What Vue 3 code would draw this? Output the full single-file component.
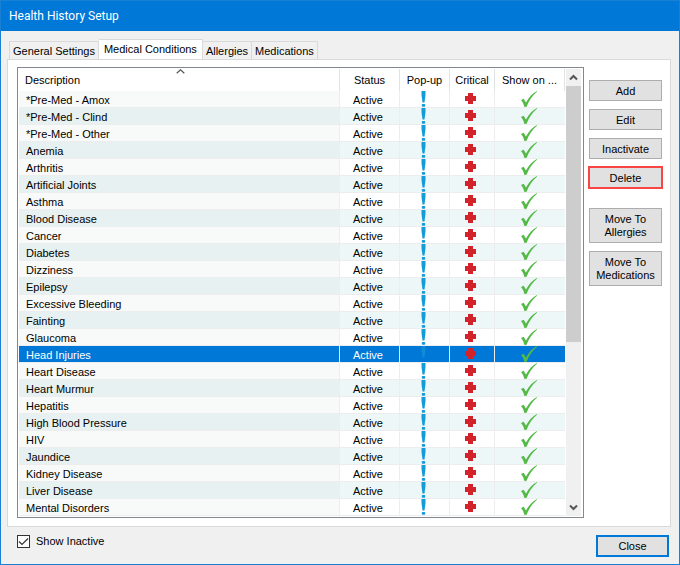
<script setup>
import { ref } from 'vue'

const tabs = ['General Settings', 'Medical Conditions', 'Allergies', 'Medications']
const activeTab = ref('Medical Conditions')
const selected = ref('Head Injuries')
const showInactive = ref(true)

const conditions = [
  '*Pre-Med - Amox', '*Pre-Med - Clind', '*Pre-Med - Other', 'Anemia', 'Arthritis',
  'Artificial Joints', 'Asthma', 'Blood Disease', 'Cancer', 'Diabetes', 'Dizziness',
  'Epilepsy', 'Excessive Bleeding', 'Fainting', 'Glaucoma', 'Head Injuries',
  'Heart Disease', 'Heart Murmur', 'Hepatitis', 'High Blood Pressure', 'HIV',
  'Jaundice', 'Kidney Disease', 'Liver Disease', 'Mental Disorders',
]
</script>

<template>
  <main class="window">
    <header class="titlebar"><h1>Health History Setup</h1></header>

    <div class="body">
      <div class="tabs" role="tablist">
        <button
          v-for="tab in tabs"
          :key="tab"
          type="button"
          role="tab"
          class="tab"
          :class="{ active: tab === activeTab }"
          :aria-selected="tab === activeTab"
          @click="activeTab = tab"
        >{{ tab }}</button>
      </div>

      <section class="panel">
        <div class="list">
          <table>
            <colgroup>
              <col />
              <col class="c-status" />
              <col class="c-popup" />
              <col class="c-critical" />
              <col class="c-show" />
            </colgroup>
            <thead>
              <tr>
                <th class="desc">
                  Description
                  <svg class="sort" width="9" height="5" viewBox="0 0 9 5"><path d="M.7 4.3 4.5.8l3.8 3.5" fill="none" stroke="#555" stroke-width="1.2" /></svg>
                </th>
                <th>Status</th>
                <th>Pop-up</th>
                <th>Critical</th>
                <th>Show on ...</th>
              </tr>
            </thead>
            <tbody>
              <tr
                v-for="name in conditions"
                :key="name"
                :class="{ selected: name === selected }"
                @click="selected = name"
              >
                <td class="desc">{{ name }}</td>
                <td>Active</td>
                <td class="icon">
                  <svg class="mark" width="5" height="16" viewBox="0 0 5 16">
                    <path class="bar" d="M.5 0h4v4L3.500 11.500h-2L.5 4z" fill="#159bd8" />
                    <rect class="dot" x=".8" y="13" width="3.400" height="2.700" rx=".8" fill="#159bd8" />
                  </svg>
                </td>
                <td class="icon">
                  <svg width="11" height="16" viewBox="0 0 11 16">
                    <path d="M3 2h5v3h3v5H8v3H3v-3H0V5h3z" fill="#d2232a" />
                  </svg>
                </td>
                <td class="icon">
                  <svg width="16" height="16" viewBox="0 0 16 16">
                    <path d="M0 9 2.600 7.800 5 11.400C8 6 11.500 2.300 16 0v.8C11.500 4.500 8 9.500 5.600 15.700L3.400 16C2.800 13.200 1.600 10.800 0 9z" fill="#55b948" />
                  </svg>
                </td>
              </tr>
            </tbody>
          </table>
          <div class="scrollbar">
            <button type="button" aria-label="Scroll up">
              <svg width="9" height="7" viewBox="0 0 9 7"><path d="m1 5.500 3.500-3.500L8 5.500" fill="none" stroke="#555" stroke-width="2" /></svg>
            </button>
            <div class="track"><div class="thumb"></div></div>
            <button type="button" aria-label="Scroll down">
              <svg width="9" height="7" viewBox="0 0 9 7"><path d="m1 1.500 3.500 3.500L8 1.500" fill="none" stroke="#555" stroke-width="2" /></svg>
            </button>
          </div>
        </div>

        <div class="actions">
          <button type="button" class="btn">Add</button>
          <button type="button" class="btn">Edit</button>
          <button type="button" class="btn">Inactivate</button>
          <button type="button" class="btn danger">Delete</button>
          <div class="moves">
            <button type="button" class="btn">Move To<br />Allergies</button>
            <button type="button" class="btn">Move To<br />Medications</button>
          </div>
        </div>
      </section>

      <footer class="footer">
        <label class="check"><input v-model="showInactive" type="checkbox" />Show Inactive</label>
        <button type="button" class="btn primary">Close</button>
      </footer>
    </div>
  </main>
</template>

<style>
body {
  margin: 0;
}
</style>

<style scoped>
* {
  box-sizing: border-box;
}
.window {
  display: flex;
  flex-direction: column;
  min-height: 100vh;
  border: 1px solid #1a80d3;
  background: #f0f0f0;
  color: #000;
  font: 11px/13px "Liberation Sans", Arial, sans-serif;
}
button,
input {
  font: inherit;
  color: inherit;
  margin: 0;
}
svg {
  display: block;
}
.titlebar {
  display: flex;
  align-items: center;
  height: 30px;
  padding: 0 8px;
  background: #0078d7;
  color: #fff;
}
h1 {
  margin: 0;
  font: 12px/16px Roboto, "Open Sans", sans-serif;
}
.body {
  display: flex;
  flex: 1;
  flex-direction: column;
  padding: 8px 8px 0 6px;
}
.tabs {
  display: flex;
  align-items: flex-end;
  height: 21px;
  margin-bottom: -1px;
  padding-left: 2px;
}
.tab {
  height: 19px;
  padding: 1px 3px 0;
  border: 1px solid #d9d9d9;
  border-left-width: 0;
  background: #f0f0f0;
  white-space: nowrap;
}
.tab:first-child {
  border-left-width: 1px;
}
.tab.active {
  height: 21px;
  padding: 0 5px 1px;
  border-bottom-color: #fff;
  background: #fff;
}
.panel {
  display: flex;
  gap: 5px;
  padding: 7px 9px 8px;
  border: 1px solid #d9d9d9;
  background: #fff;
}
.list {
  display: flex;
  flex: 1;
  min-width: 0;
  padding: 1px;
  border: 1px solid #828790;
}
table {
  flex: 1;
  width: 0;
  border-collapse: separate;
  border-spacing: 0;
  table-layout: fixed;
}
.c-status {
  width: 60px;
}
.c-popup {
  width: 50px;
}
.c-critical {
  width: 45px;
}
.c-show {
  width: 70px;
}
th,
td {
  padding: 0;
  border-right: 1px solid #ededed;
  text-align: center;
  white-space: nowrap;
}
th {
  position: relative;
  height: 22px;
  border-color: #e2e2e2;
  font-weight: normal;
}
td {
  height: 17px;
  padding-top: 2px;
  padding-right: 3px;
  border-bottom: 1px solid #ededed;
  line-height: 14px;
}
td.icon {
  padding-top: 0;
}
td:last-child {
  border-right: 0;
}
td svg {
  margin: 0 auto;
}
.desc {
  padding-left: 7px;
  text-align: left;
}
th.desc {
  padding-left: 6px;
}
td.desc {
  background: #f7faf9;
}
tr:nth-child(even) td {
  background: #edf7f8;
}
tr:nth-child(even) td.desc {
  background: #e7f1f1;
}
tbody tr.selected:nth-child(n) td:nth-child(n) {
  background: #0078d7;
  color: #fff;
}
.selected .bar {
  opacity: 0.6;
}
.selected .dot {
  opacity: 0;
}
.sort {
  position: absolute;
  top: 0;
  left: 49%;
}
.scrollbar {
  display: flex;
  flex-direction: column;
  width: 17px;
  padding-right: 1px;
  padding-left: 1px;
}
.scrollbar button {
  display: flex;
  align-items: center;
  justify-content: center;
  height: 17px;
  padding: 0;
  border: 0;
  background: #f0f0f0;
}
.track {
  flex: 1;
  background: #f0f0f0;
}
.thumb {
  height: 62%;
  background: #cdcdcd;
}
.actions {
  display: flex;
  flex-direction: column;
  gap: 8px;
  width: 73px;
  margin-right: -1px;
  padding-top: 13px;
}
.btn {
  min-height: 21px;
  padding: 1px 4px 0;
  border: 1px solid #adadad;
  background: #e1e1e1;
}
.btn.danger {
  border-color: #fa4545;
  box-shadow: 0 0 0 1px #fa4545;
}
.moves {
  display: flex;
  flex-direction: column;
  gap: 8px;
  padding-top: 12px;
}
.moves .btn {
  min-height: 35px;
}
.footer {
  display: flex;
  align-items: flex-start;
  justify-content: space-between;
  padding: 8px 2px 0 10px;
}
.check {
  display: flex;
  align-items: center;
  gap: 6px;
}
.check input {
  width: 13px;
  height: 13px;
  appearance: none;
  border: 1px solid #333;
  background: #fff;
}
.check input:checked {
  background: #fff url("data:image/svg+xml,%3Csvg xmlns='http://www.w3.org/2000/svg' viewBox='0 0 11 11'%3E%3Cpath d='M1 5.500 4 8.500l6-6' fill='none' stroke='%23333' stroke-width='1.200'/%3E%3C/svg%3E");
}
.btn.primary {
  width: 73px;
  height: 22px;
  border: 2px solid #0078d7;
}
</style>
